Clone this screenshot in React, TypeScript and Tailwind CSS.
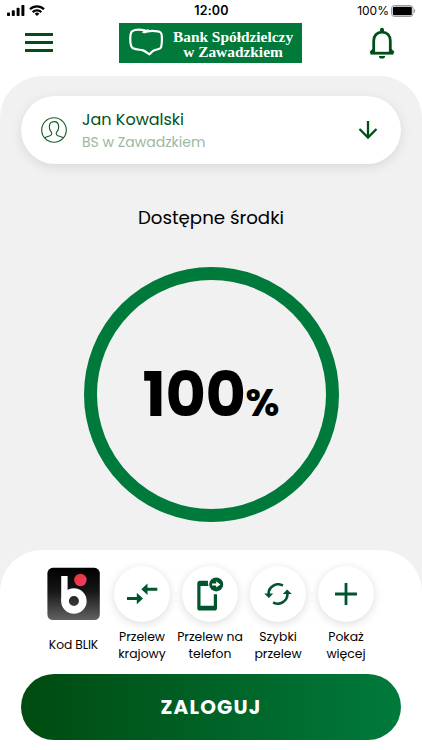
import type { ReactNode } from 'react'

const actions = [
  { id: 'domestic', lines: ['Przelew', 'krajowy'], icon: <TransferIcon /> },
  { id: 'phone', lines: ['Przelew na', 'telefon'], icon: <PhoneTransferIcon /> },
  { id: 'quick', lines: ['Szybki', 'przelew'], icon: <RefreshIcon /> },
  { id: 'more', lines: ['Pokaż', 'więcej'], icon: <PlusIcon /> },
]

function SignalIcon() {
  return (
    <svg width="18" height="11" viewBox="0 0 18 11" fill="#000">
      <rect x="0" y="7.5" width="3" height="3.5" rx="0.8" />
      <rect x="4.8" y="5.3" width="3" height="5.7" rx="0.8" />
      <rect x="9.6" y="2.8" width="3" height="8.2" rx="0.8" />
      <rect x="14.4" y="0" width="3" height="11" rx="0.8" />
    </svg>
  )
}

function WifiIcon() {
  return (
    <svg width="16" height="11" viewBox="0 0 16 11" fill="none" stroke="#000" strokeWidth="2.2">
      <path d="M1 4.2a10 10 0 0 1 14 0" />
      <path d="M3.7 7.1a6.1 6.1 0 0 1 8.6 0" />
      <path d="M8 11 5.7 8.7a3.3 3.3 0 0 1 4.6 0Z" fill="#000" stroke="none" />
    </svg>
  )
}

function BatteryIcon() {
  return (
    <svg width="25" height="12" viewBox="0 0 25 12">
      <rect x="0.5" y="0.5" width="21.5" height="11" rx="2.8" fill="none" stroke="#999" />
      <rect x="1.8" y="1.8" width="19" height="8.4" rx="1.3" fill="#000" />
      <path d="M23 4v4c1.6-.6 1.6-3.4 0-4Z" fill="#999" />
    </svg>
  )
}

function BellIcon() {
  return (
    <svg width="28" height="32" viewBox="0 0 28 32" fill="none" stroke="#004f19" strokeWidth="2.8">
      <path d="M5.7 25V14C5.7 8.5 9 5.1 14 5.1s8.3 3.4 8.3 8.9v11" />
      <path d="M2.5 26.2h23" />
      <path d="M5.7 22.7 2.5 26M22.3 22.7l3.2 3.3" />
      <path d="M12 5V2.7a2 2 0 0 1 4 0V5Z" fill="#004f19" stroke="none" />
      <path d="M10.9 28.9h6.2a3.1 2.7 0 0 1-6.2 0Z" fill="#004f19" stroke="none" />
    </svg>
  )
}

function UserIcon() {
  return (
    <svg width="26" height="26" viewBox="0 0 26 26" fill="none" stroke="#155b28" strokeWidth="1.1">
      <circle cx="13" cy="13" r="12.3" />
      <path d="M3.4 20.7c2-1 4.5-1.4 6.1-2.2 1.7-.9 1.5-2.4.6-3.6C8.8 13.2 8.3 11.8 8.3 9.7c0-3.2 1.8-5.1 4.7-5.1s4.7 1.9 4.7 5.1c0 2.1-.5 3.5-1.8 5.2-.9 1.2-1.1 2.7.6 3.6 1.6.8 4.1 1.2 6.1 2.2" />
    </svg>
  )
}

function BankMark() {
  return (
    <svg width="36" height="28" viewBox="0 0 36 28" fill="none" stroke="#fff" strokeLinejoin="round">
      <path
        d="M15.5 4.6C20 2.6 25 2.6 29.5 3.3c3 .4 4.2 1.200 4.300 4.700.2 4 .2 8.500-.8 11.500-1.200 1.900-4.500 1.700-7.200 3-1.800.9-3 2.300-4.300 3.800-2.200-1.400-4-3-6.500-3.900C12.500 21.500 8.500 22 5 20.200 2.900 19 2.300 16 2.300 12c0-3-.3-6.500 1.700-8.700C7 1.300 13 1.500 17.500 2.600"
        strokeWidth="2.2"
      />
      <path d="M14.5 4.900c1.500-1.900 3.500-2.800 6-3.200" strokeWidth="1.2" />
    </svg>
  )
}

function BlikIcon() {
  return (
    <svg width="54" height="54" viewBox="0 0 54 54">
      <defs>
        <linearGradient id="blik-bg" x1="0" y1="0" x2="0" y2="1">
          <stop offset="0" stopColor="#000" />
          <stop offset="0.45" stopColor="#161616" />
          <stop offset="1" stopColor="#626262" />
        </linearGradient>
        <linearGradient id="blik-dot" x1="0" y1="0" x2="1" y2="1">
          <stop offset="0" stopColor="#ed3024" />
          <stop offset="1" stopColor="#e9437c" />
        </linearGradient>
      </defs>
      <rect x="1.4" y="0.8" width="52.4" height="52.2" rx="5.5" fill="url(#blik-bg)" />
      <path d="M18.4 9v25" stroke="#fff" strokeWidth="6.4" />
      <circle cx="27.9" cy="34" r="8.9" fill="none" stroke="#fff" strokeWidth="7.7" />
      <circle cx="34.4" cy="13" r="6.2" fill="url(#blik-dot)" />
    </svg>
  )
}

function TransferIcon() {
  return (
    <svg width="32" height="22" viewBox="0 0 32 22" fill="#00552d">
      <path d="M1 14h9.8V9.7l6.2 5.8-6.2 5.8V17H1Z" />
      <path d="M31.3 4.8h-9.8V.5l-6.2 5.8 6.2 5.8V7.8h9.8Z" />
    </svg>
  )
}

function PhoneTransferIcon() {
  return (
    <svg width="28" height="34" viewBox="0 0 28 34">
      <path
        d="M12.1 3.7H4A2.7 2.7 0 0 0 1.3 6.4v24.5A2.7 2.7 0 0 0 4 33.6h14.3a2.7 2.7 0 0 0 2.7-2.7V17.2h-3.2v11.6H4.5V8.9h7.9a9 9 0 0 1-.3-5.2Z"
        fill="#00552d"
      />
      <circle cx="20.2" cy="7.4" r="7" fill="#00552d" />
      <path d="M16.1 6.4h4.1V4.2l4.2 3.2-4.2 3.2V8.4h-4.1Z" fill="#fff" />
    </svg>
  )
}

function RefreshIcon() {
  return (
    <svg width="28" height="22" viewBox="0 0 28 22" fill="none" stroke="#00552d" strokeWidth="2.6">
      <path d="M18.9 2.7A9.500 9.500 0 0 0 4.6 11.5" />
      <path d="M.2 10.500h9L4.900 15Z" fill="#00552d" stroke="none" />
      <path d="M9.1 19.300A9.500 9.500 0 0 0 23.400 10.500" />
      <path d="M18.800 11h9L23.100 6.500Z" fill="#00552d" stroke="none" />
    </svg>
  )
}

function PlusIcon() {
  return (
    <svg width="22" height="22" viewBox="0 0 22 22" stroke="#00552d" strokeWidth="2.8">
      <path d="M11 0v22M0 11h22" />
    </svg>
  )
}

function RoundButton({ children }: { children: ReactNode }) {
  return (
    <span className="flex size-[56px] items-center justify-center rounded-full bg-white shadow-[0_2px_10px_rgba(0,0,0,0.14)]">
      {children}
    </span>
  )
}

export default function App() {
  return (
    <div className="flex h-[750px] w-[422px] flex-col overflow-hidden bg-white font-['Poppins','Inter',sans-serif] text-black">
      {/* Status bar */}
      <div className="grid h-[22px] shrink-0 grid-cols-3 items-center pl-[7px] pr-[6px]">
        <div className="flex items-center gap-1 pb-px">
          <SignalIcon />
          <WifiIcon />
        </div>
        <span className="text-center font-['Inter',sans-serif] text-[12.5px] font-semibold tracking-[0.2px]">12:00</span>
        <div className="flex items-center justify-end gap-[2px] pb-px">
          <span className="pt-px font-['Inter',sans-serif] text-[12px]">100%</span>
          <BatteryIcon />
        </div>
      </div>

      {/* Header */}
      <header className="flex h-[54px] shrink-0 items-start pl-[25px]">
        <button aria-label="Menu" className="mt-[11px] flex w-[28px] flex-col gap-[5px]">
          <span className="h-[3px] bg-[#004f19]" />
          <span className="h-[3px] bg-[#004f19]" />
          <span className="h-[3px] bg-[#004f19]" />
        </button>
        <div className="ml-[66px] mt-px flex h-[40px] w-[183px] bg-[#00793a] pl-[9px] pt-[5px]">
          <BankMark />
          <p className="ml-[6px] w-[126px] whitespace-nowrap pt-px text-center font-['Liberation_Serif',serif] text-[15.4px] font-bold leading-[15px] text-white">
            Bank Spółdzielczy
            <br />
            w Zawadzkiem
          </p>
        </div>
        <button aria-label="Powiadomienia" className="ml-[66px] mt-[5px]">
          <BellIcon />
        </button>
      </header>

      <main className="flex min-h-0 flex-1 flex-col rounded-t-[42px] bg-[#f1f1f1] pt-5">
        {/* Account selector */}
        <div className="mx-[21px] flex h-[68px] w-[380px] shrink-0 items-center rounded-full bg-white pl-5 pr-[23px] shadow-[0_3px_12px_rgba(0,0,0,0.1)]">
          <UserIcon />
          <div className="ml-[15px] flex-1 pt-[2px]">
            <p className="text-[16px] leading-[22px] text-[#00511a]">Jan Kowalski</p>
            <p className="text-[14px] leading-[22px] text-[#9bb8a2]">BS w Zawadzkiem</p>
          </div>
          <svg width="20" height="20" viewBox="0 0 20 20" fill="none" stroke="#004f19" strokeWidth="2.3">
            <path d="M10 1v17M1.5 9 10 17.5 18.5 9" />
          </svg>
        </div>

        {/* Available funds */}
        <h1 className="mt-[42px] shrink-0 text-center text-[18.2px] leading-6">Dostępne środki</h1>
        <div className="mx-auto mt-[37px] flex size-[255px] shrink-0 items-center justify-center rounded-full border-[13px] border-[#007a3a]">
          <p className="flex items-baseline pt-px font-bold leading-none">
            <span className="text-[62px] tracking-[-0.4px]">100</span>
            <span className="text-[39px]">%</span>
          </p>
        </div>

        {/* Quick actions */}
        <section className="mt-7 flex flex-1 flex-col rounded-t-[42px] bg-white">
          <div className="flex pl-[38px] pt-4">
            <button className="flex w-[70px] flex-col items-center pt-px">
              <BlikIcon />
              <span className="mt-[15px] pl-px text-[12.3px] leading-[17px] tracking-[-0.1px]">Kod BLIK</span>
            </button>
            {actions.map((action) => (
              <button key={action.id} className="flex w-[68px] flex-col items-center">
                <RoundButton>{action.icon}</RoundButton>
                <span className="mt-[6px] flex flex-col items-center whitespace-nowrap text-[12.4px] leading-[17px]">
                  <span>{action.lines[0]}</span>
                  <span>{action.lines[1]}</span>
                </span>
              </button>
            ))}
          </div>
          <button className="ml-[21px] mt-[12px] h-[66px] w-[380px] rounded-full bg-linear-to-r from-[#004b10] to-[#007a3c] text-[20px] font-bold tracking-[1.2px] text-white">
            ZALOGUJ
          </button>
        </section>
      </main>
    </div>
  )
}
